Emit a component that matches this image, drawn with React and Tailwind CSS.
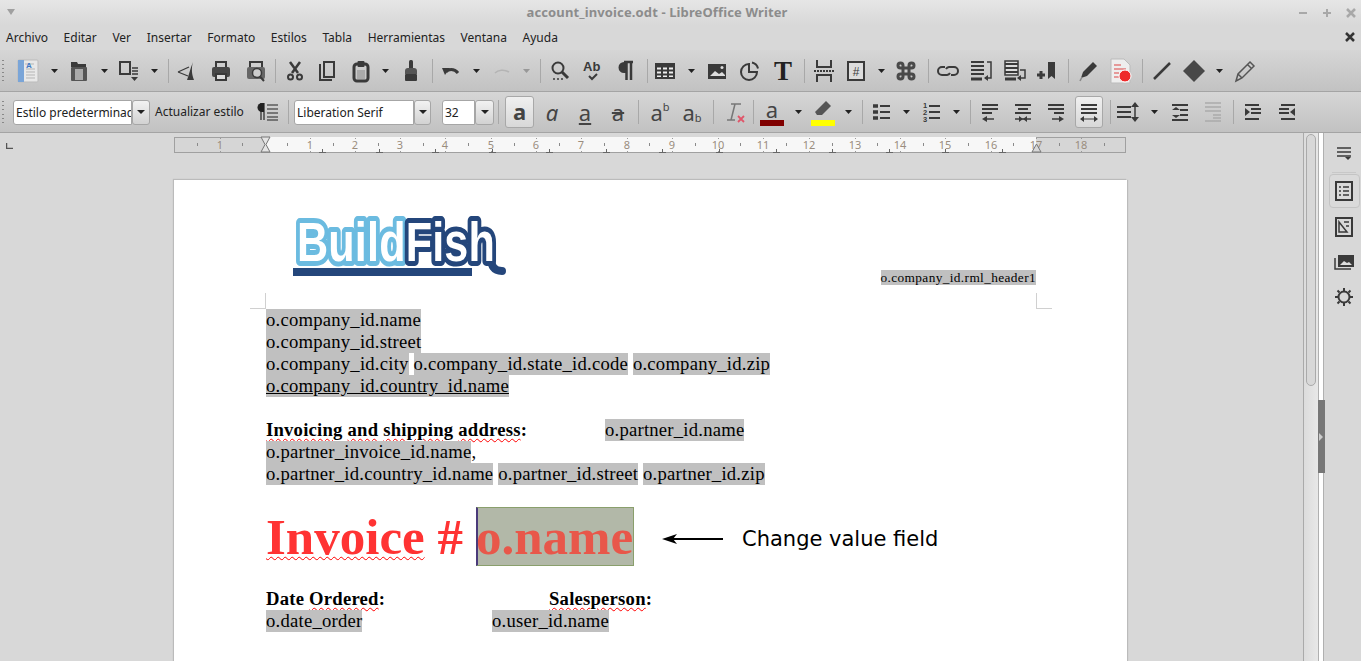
import React from 'react';

const ink = '#3a3a3a';

const Arrow = ({ className = '' }) => (
  <div className={`w-[8px] h-[24px] flex items-center justify-center shrink-0 ${className}`}>
    <svg width="7" height="4" viewBox="0 0 7 4"><path d="M0 0h7L3.500 4z" fill="#222" /></svg>
  </div>
);

const Sep = ({ className = '' }) => (
  <div className={`w-[1px] h-[24px] bg-[#a8a8a8] shrink-0 ${className}`} />
);

const Grip = () => (
  <div className="ml-[2px] w-[2px] h-[24px] shrink-0 flex flex-col justify-between py-[1px]">
    {[0, 1, 2, 3, 4, 5].map((i) => <div key={i} className="w-[2px] h-[1px] bg-[#888]" />)}
  </div>
);

const Ico = ({ className = '', children }) => (
  <div className={`w-[24px] h-[24px] flex items-center justify-center shrink-0 ${className}`}>
    <svg className="overflow-visible" width="24" height="24" viewBox="0 0 24 24" fill="none" stroke={ink} strokeWidth="2">{children}</svg>
  </div>
);

const Combo = ({ text, inputW, btnW, className = '' }) => (
  <div className={`flex h-[25px] shrink-0 ${className}`}>
    <div className={`${inputW} bg-white border border-[#a6a6a6] rounded-l-[3px] text-[12px] text-[#222] pl-[2px] leading-[24px] overflow-hidden whitespace-nowrap`}>{text}</div>
    <div className={`${btnW} bg-gradient-to-b from-[#f2f2f2] to-[#d2d2d2] border border-[#a6a6a6] rounded-[3px] flex items-center justify-center`}>
      <svg width="8" height="4" viewBox="0 0 8 4"><path d="M0 0h8L4 4z" fill="#222" /></svg>
    </div>
  </div>
);

const lines = (ys, x1, x2, w = 2) => ys.map((y) => <path key={y} d={`M${x1} ${y}H${x2}`} strokeWidth={w} />);

const Letter = ({ style = '', children }) => (
  <span className={`text-[22px] leading-none text-[#444] ${style}`}>{children}</span>
);

const TopToolbar = () => (
  <div className="h-[42px] flex items-center shrink-0 border-b border-[#a4a4a4] bg-gradient-to-b from-[#d6d6d6] to-[#c2c2c2]">
    <Grip />
    <Ico className="ml-[12px]">
      <rect x="2" y="1" width="20" height="22" rx="1" fill="#e8e8e8" stroke="#bbb" strokeWidth="1" />
      <rect x="2" y="1" width="6" height="22" fill="#7aa5d8" stroke="none" />
      <path d="M9 5h9M10 10h9M10 13h9M10 16h9M10 19h9" stroke="#b5b5b5" strokeWidth="1" />
      <text x="10" y="9" fontSize="8" fontFamily="Liberation Sans" fontWeight="700" fill="#3f78c4" stroke="none">A</text>
    </Ico>
    <Arrow className="ml-[10px]" />
    <Ico className="ml-[9px]">
      <path d="M4 3h6l1 2h8v3H4z" fill={ink} stroke="none" />
      <rect x="4" y="8" width="16" height="14" rx="1" fill="#555" stroke="none" />
      <rect x="8" y="10" width="8" height="11" fill="#aaa" stroke="none" />
    </Ico>
    <Arrow className="ml-[9px]" />
    <Ico className="ml-[8px]">
      <rect x="4" y="3" width="10" height="12" strokeWidth="2" />
      <path d="M16 9h6M16 12h6M16 15h6" strokeWidth="1.500" />
      <path d="M15 18h7l-3.500 4z" fill={ink} stroke="none" />
    </Ico>
    <Arrow className="ml-[10px]" />
    <Sep className="ml-[10px]" />
    <Ico className="ml-[5px]">
      <path d="M19 3C16 10 15 16 13 21h7c-2-5-3-11-1-18z" fill={ink} stroke="none" />
      <path d="M4 13l11-5M4 13l10 4" strokeWidth="1.300" />
    </Ico>
    <Ico className="ml-[11px]">
      <rect x="7" y="3" width="10" height="6" strokeWidth="2" />
      <rect x="3" y="8" width="18" height="10" rx="2" fill="#484848" stroke="none" />
      <rect x="7" y="15" width="10" height="6" fill="#ddd" strokeWidth="2" />
    </Ico>
    <Ico className="ml-[11px]">
      <path d="M6 8V3h12v5" strokeWidth="2" />
      <rect x="3" y="8" width="18" height="12" rx="2" fill="#666" stroke="none" />
      <circle cx="13" cy="14" r="4.500" fill="#ccc" strokeWidth="1.500" />
      <path d="M16 17.500L20 22" strokeWidth="2" />
    </Ico>
    <Sep className="ml-[7px]" />
    <Ico className="ml-[7px]">
      <path d="M7 3l8 11M17 3L9 14" strokeWidth="2.500" />
      <circle cx="7.500" cy="18" r="2.500" /><circle cx="16.500" cy="18" r="2.500" />
    </Ico>
    <Ico className="ml-[8px]">
      <path d="M9 3h10v15H9z" strokeWidth="2" />
      <path d="M6 6H5v15h11v-1" strokeWidth="2" />
    </Ico>
    <Ico className="ml-[10px]">
      <rect x="5" y="5" width="14" height="17" rx="3" strokeWidth="3" />
      <rect x="8.500" y="2" width="7" height="6" rx="1" fill={ink} stroke="none" />
      <rect x="8" y="11" width="8" height="9" fill="#aaa" stroke="none" />
    </Ico>
    <Arrow className="ml-[8px]" />
    <Ico className="ml-[10px]">
      <rect x="10" y="1" width="4" height="9" rx="1.500" fill={ink} stroke="none" />
      <path d="M6 12c0-2 1-3 3-3h6c2 0 3 1 3 3v3H6z" fill="#555" stroke="none" />
      <rect x="6" y="15" width="12" height="7" rx="1" fill={ink} stroke="none" />
    </Ico>
    <Sep className="ml-[9px]" />
    <Ico className="ml-[6px]">
      <path d="M7 13c2-3 8-4 12 1" strokeWidth="3" />
      <path d="M3 9l8 0-5 7z" fill={ink} stroke="none" />
    </Ico>
    <Arrow className="ml-[9px]" />
    <Ico className="ml-[11px]">
      <path d="M4 14c3-3 9-4 14-1" stroke="#b4b4b4" strokeWidth="1.500" />
    </Ico>
    <Arrow className="ml-[7px] opacity-30" />
    <Sep className="ml-[10px]" />
    <Ico className="ml-[7px]">
      <circle cx="10" cy="9" r="5.500" strokeWidth="2" />
      <path d="M14 13l6 6" strokeWidth="3" />
      <path d="M5 20h2M9 20h2M13 20h2" strokeWidth="1.500" />
    </Ico>
    <Ico className="ml-[9px]">
      <text x="2" y="12" fontSize="13" fontFamily="Liberation Sans" fontWeight="700" fill={ink} stroke="none">Ab</text>
      <path d="M8 17l3 3 5-5" strokeWidth="2" />
    </Ico>
    <Ico className="ml-[9px]">
      <path d="M13 3h-3a5.500 5.500 0 0 0 0 11h3z" fill={ink} stroke="none" />
      <path d="M12.500 3v18M17 3v18M10 3h9" strokeWidth="2.500" />
    </Ico>
    <Sep className="ml-[9px]" />
    <Ico className="ml-[5px]">
      <rect x="3" y="5" width="18" height="14" fill="#eee" strokeWidth="2" />
      <path d="M3 7h18" strokeWidth="3" />
      <path d="M3 11.500h18M3 15.500h18M9 7v12M15 7v12" strokeWidth="2" />
    </Ico>
    <Arrow className="ml-[10px]" />
    <Ico className="ml-[10px]">
      <rect x="3" y="5" width="18" height="15" fill={ink} stroke="none" />
      <path d="M5 17l5-5 4 3 3-2 3 3v1H5z" fill="#ddd" stroke="none" />
      <circle cx="17" cy="8.500" r="1.500" fill="#ddd" stroke="none" />
    </Ico>
    <Ico className="ml-[9px]">
      <path d="M11 5a8 8 0 1 0 8 8h-8zM14 3.500a8 8 0 0 1 6 6" strokeWidth="2" />
    </Ico>
    <Ico className="ml-[9px]">
      <text x="12" y="21" textAnchor="middle" fontSize="27" fontFamily="Liberation Serif" fontWeight="700" fill="#222" stroke="none">T</text>
    </Ico>
    <Sep className="ml-[9px]" />
    <Ico className="ml-[7px]">
      <path d="M5 1v7h14V1M5 23v-7h14v7" strokeWidth="2" />
      <path d="M2 12h20" strokeWidth="2" strokeDasharray="2 1" />
    </Ico>
    <Ico className="ml-[8px]">
      <rect x="4" y="3" width="16" height="18" fill="#ddd" strokeWidth="2" />
      <text x="12" y="17" textAnchor="middle" fontSize="12" fontFamily="Liberation Sans" fill={ink} stroke="none">#</text>
    </Ico>
    <Arrow className="ml-[9px]" />
    <Ico className="ml-[9px]">
      <path d="M9 9V6.500a2.500 2.500 0 1 0-2.500 2.500h11a2.500 2.500 0 1 0-2.500-2.500v11a2.500 2.500 0 1 0 2.500-2.500h-11a2.500 2.500 0 1 0 2.500 2.500z" stroke="#4a4a4a" strokeWidth="3" />
    </Ico>
    <Sep className="ml-[10px]" />
    <Ico className="ml-[7px]">
      <path d="M9 8H6a4 4 0 0 0 0 8h5a4 4 0 0 0 3-2M15 16h3a4 4 0 0 0 0-8h-5a4 4 0 0 0-3 2" strokeWidth="2" />
    </Ico>
    <Ico className="ml-[9px]">
      {lines([3, 7, 11, 15], 2, 15, 2)}
      <path d="M18 3h4v16h-6" strokeWidth="1.500" />
      <path d="M2 20h11" strokeWidth="3" />
      <path d="M19 16l-4 3 4 3z" fill={ink} stroke="none" />
    </Ico>
    <Ico className="ml-[10px]">
      <rect x="2" y="2" width="13" height="14" fill="#ddd" strokeWidth="1.500" />
      {lines([5, 9, 13], 2, 15, 2)}
      <path d="M17 11h5v8h-6" strokeWidth="1.500" />
      <path d="M2 20h11" strokeWidth="3" />
      <path d="M18 16l-4 3 4 3z" fill={ink} stroke="none" />
    </Ico>
    <Ico className="ml-[8px]">
      <path d="M2 16h8M6 12v8" strokeWidth="3" />
      <path d="M13 3h7v17l-3.500-3-3.500 3z" fill={ink} stroke="none" />
    </Ico>
    <Sep className="ml-[9px]" />
    <Ico className="ml-[7px]">
      <path d="M5 19l2-6L17 3l4 4-10 10z" fill={ink} stroke="none" />
      <path d="M4 22l2-4" strokeWidth="1.500" stroke="#888" />
    </Ico>
    <Ico className="ml-[9px]">
      <path d="M2 0h13l6 6v18H2z" fill="#eee" stroke="#bbb" strokeWidth="1" />
      <path d="M5 6h7M5 10h12M5 14h5M5 18h6" stroke="#d44" strokeWidth="1" />
      <circle cx="16" cy="17" r="6" fill="#ee2a2a" stroke="#fff" strokeWidth="1" />
    </Ico>
    <Sep className="ml-[9px]" />
    <Ico className="ml-[7px]"><path d="M4 20L20 4" strokeWidth="2.500" /></Ico>
    <Ico className="ml-[8px]"><path d="M12 1l11 11-11 11L1 12z" fill="#484848" stroke="none" /></Ico>
    <Arrow className="ml-[9px]" />
    <Ico className="ml-[10px]">
      <path d="M3 22l2-7L17 3l4 4L9 19zM14.500 5.500l4 4M5 15l4 4" strokeWidth="1.500" stroke="#555" />
    </Ico>
  </div>
);

const FormatToolbar = () => (
  <div className="h-[41px] flex items-center shrink-0 border-b border-[#a4a4a4] bg-gradient-to-b from-[#d6d6d6] to-[#c2c2c2]">
    <Grip />
    <Combo className="ml-[9px]" text="Estilo predeterminado" inputW="w-[119px]" btnW="w-[18px]" />
    <div className="ml-[5px] w-[90px] text-[12px] text-[#222] whitespace-nowrap shrink-0">Actualizar estilo</div>
    <Ico className="ml-[11px]">
      <path d="M8 3H6a4 4 0 0 0 0 9h2z" fill="#222" stroke="none" />
      <path d="M8 3v17M5 3v17M11 5h11M11 9h11M11 13h11M11 17h11M11 20h11" stroke="#222" strokeWidth="1.200" />
    </Ico>
    <Sep className="ml-[8px]" />
    <Combo className="ml-[5px]" text="Liberation Serif" inputW="w-[120px]" btnW="w-[17px]" />
    <Combo className="ml-[11px]" text="32" inputW="w-[33px]" btnW="w-[19px]" />
    <Sep className="ml-[4px]" />
    <div className="ml-[6px] w-[29px] h-[32px] shrink-0 bg-gradient-to-b from-[#f0f0f0] to-[#d8d8d8] border border-[#a8a8a8] rounded-[3px] flex items-center justify-center">
      <span className="text-[22px] leading-none font-bold text-[#444] -mt-[3px]">a</span>
    </div>
    <div className="ml-[6px] w-[24px] flex justify-center shrink-0"><Letter style="italic">a</Letter></div>
    <div className="ml-[9px] w-[24px] flex justify-center shrink-0"><Letter style="underline decoration-2 underline-offset-2">a</Letter></div>
    <div className="ml-[9px] w-[24px] flex justify-center shrink-0"><Letter style="line-through decoration-2">a</Letter></div>
    <Sep className="ml-[8px]" />
    <div className="ml-[9px] w-[24px] flex justify-center items-start shrink-0"><Letter>a</Letter><span className="text-[11px] leading-none text-[#444]">b</span></div>
    <div className="ml-[8px] w-[24px] flex justify-center items-end shrink-0"><Letter>a</Letter><span className="text-[11px] leading-none text-[#444]">b</span></div>
    <Sep className="ml-[9px]" />
    <Ico className="ml-[9px]">
      <path d="M8 4h10M12 4L8 20M4 20h8" stroke="#777" strokeWidth="1.500" />
      <path d="M15 16l6 6M21 16l-6 6" stroke="#e0566a" strokeWidth="1.800" />
    </Ico>
    <Sep className="ml-[6px]" />
    <div className="ml-[6px] w-[24px] h-[28px] flex flex-col items-center shrink-0">
      <span className="text-[22px] leading-[22px] text-[#444]">a</span>
      <div className="w-[24px] h-[6px] bg-[#800000]" />
    </div>
    <Arrow className="ml-[10px]" />
    <div className="ml-[9px] w-[24px] h-[28px] flex flex-col items-center justify-between shrink-0">
      <svg width="20" height="20" viewBox="0 0 20 20"><path d="M2 14L13 3l5 5-9 9H4z" fill="#555" /></svg>
      <div className="w-[24px] h-[6px] bg-[#ffff00]" />
    </div>
    <Arrow className="ml-[9px]" />
    <Sep className="ml-[10px]" />
    <Ico className="ml-[6px]">
      <path d="M4 6h5M4 12h5M4 18h5" strokeWidth="3.500" />
      <path d="M11 6h10M11 12h10M11 18h10" strokeWidth="2" />
    </Ico>
    <Arrow className="ml-[9px]" />
    <Ico className="ml-[9px]">
      <text x="4" y="8" fontSize="7.500" fontFamily="Liberation Sans" fontWeight="700" fill={ink} stroke="none">1</text>
      <text x="4" y="15" fontSize="7.500" fontFamily="Liberation Sans" fontWeight="700" fill={ink} stroke="none">2</text>
      <text x="4" y="22" fontSize="7.500" fontFamily="Liberation Sans" fontWeight="700" fill={ink} stroke="none">3</text>
      <path d="M10 6h11M10 12h11M10 18h11" strokeWidth="2" />
    </Ico>
    <Arrow className="ml-[9px]" />
    <Sep className="ml-[10px]" />
    <Ico className="ml-[7px]">
      <path d="M4 5h16M4 9h16M4 13h10" strokeWidth="2" />
      <path d="M7 19h9" strokeWidth="1.500" /><path d="M4 19l5-3v6z" fill={ink} stroke="none" />
    </Ico>
    <Ico className="ml-[9px]">
      <path d="M4 5h16M7 9h10M4 13h16" strokeWidth="2" />
      <path d="M4 19h16" strokeWidth="1.500" /><path d="M12 19l-4-3v6zM12 19l4-3v6z" fill={ink} stroke="none" />
    </Ico>
    <Ico className="ml-[9px]">
      <path d="M4 5h16M4 9h16M10 13h10" strokeWidth="2" />
      <path d="M8 19h9" strokeWidth="1.500" /><path d="M20 19l-5-3v6z" fill={ink} stroke="none" />
    </Ico>
    <div className="ml-[7px] w-[28px] h-[32px] shrink-0 bg-gradient-to-b from-[#f0f0f0] to-[#d8d8d8] border border-[#a8a8a8] rounded-[3px] flex items-center justify-center">
      <svg width="20" height="24" viewBox="0 0 20 24" fill="none" stroke={ink}>
        <path d="M2 5h16M2 9h16M2 13h16" strokeWidth="2" />
        <path d="M3 19h14" strokeWidth="1" /><path d="M1 19l4-3v6zM19 19l-4-3v6z" fill={ink} stroke="none" />
      </svg>
    </div>
    <Sep className="ml-[7px]" />
    <Ico className="ml-[5px]">
      <path d="M1 7h14M1 12h14M1 17h14" strokeWidth="2" />
      <path d="M19 6v12" strokeWidth="1.500" /><path d="M19 2l-4 5h8zM19 22l-4-5h8z" fill={ink} stroke="none" />
    </Ico>
    <Arrow className="ml-[10px]" />
    <Ico className="ml-[10px]">
      <path d="M4 5h16M12 10h8M12 15h8M4 20h16" strokeWidth="2" />
      <path d="M8 7l-4 3h8zM8 18l-4-3h8z" fill={ink} stroke="none" />
    </Ico>
    <Ico className="ml-[9px]">
      <path d="M4 3h16M4 7h16M4 11h16M12 15h8M12 18h8M4 21h16" stroke="#aaa" strokeWidth="1.500" />
    </Ico>
    <Sep className="ml-[8px]" />
    <Ico className="ml-[7px]">
      <path d="M4 5h14M10 9h10M10 13h10M4 19h14" strokeWidth="2" />
      <path d="M4 8l5 4-5 4z" fill={ink} stroke="none" />
    </Ico>
    <Ico className="ml-[10px]">
      <path d="M6 5h14M4 9h10M4 13h10M6 19h14" strokeWidth="2" />
      <path d="M20 8l-5 4 5 4z" fill={ink} stroke="none" />
    </Ico>
  </div>
);

// ruler numbers sit at fixed spots on the scale
const rulerNums = [
  [220, '1'], [310, '1'], [355, '2'], [400, '3'], [445, '4'], [491, '5'], [536, '6'], [581, '7'], [627, '8'],
  [672, '9'], [718, '10'], [763, '11'], [809, '12'], [855, '13'], [900, '14'], [945, '15'], [991, '16'], [1036, '17'], [1081, '18'],
];
const rulerDots = [197, 242, 287, 333, 378, 423, 468, 514, 559, 604, 649, 695, 740, 786, 832, 877, 923, 968, 1013, 1059, 1104];
const tabStops = [322, 379, 435, 492, 549, 606, 662, 719, 776, 832, 889, 945, 1002];

const Ruler = () => (
  <div className="relative h-[28px] shrink-0">
    <svg className="absolute left-[6px] top-[10px]" width="7" height="6"><path d="M0.500 0v5.500H7" stroke="#555" fill="none" strokeWidth="1.500" /></svg>
    <div className="absolute left-[174px] top-[4px] w-[952px] h-[16px] border border-[#a0a0a0] bg-[#d6d6d6]" />
    <div className="absolute left-[265px] top-[4px] w-[771px] h-[15px] bg-[#f7f7f7]" />
    {rulerNums.map(([x, n]) => (
      <span key={x} style={{ left: x - 10 }} className="absolute top-[4px] w-[20px] text-center text-[11px] leading-[16px] text-[#9a8d7e]">{n}</span>
    ))}
    {rulerNums.map(([x]) => (
      <div key={x} style={{ left: x }} className="absolute top-[5px] w-[1px] h-[14px] border-y border-[#999]" />
    ))}
    {rulerDots.map((x) => <div key={x} style={{ left: x }} className="absolute top-[10px] w-[1px] h-[3px] bg-[#8a8a8a]" />)}
    {tabStops.map((x) => (
      <svg key={x} style={{ left: x - 3 }} className="absolute top-[16px]" width="7" height="4"><path d="M3.500 0v3.500M0 3.500h7" stroke="#666" fill="none" /></svg>
    ))}
    <svg className="absolute left-[260px] top-[3px]" width="11" height="17" viewBox="0 0 11 17"><path d="M1 1h9L6 8.500l4 7.500H1l4-7.500z" fill="#e4e4e4" stroke="#777" /></svg>
    <svg className="absolute left-[1031px] top-[3px]" width="11" height="17" viewBox="0 0 11 17"><path d="M5.500 8l4.500 8H1z" fill="#d8d8d8" stroke="#777" /></svg>
  </div>
);

const Field = ({ children }) => <span className="inline-block h-[22px] bg-[#c0c0c0]">{children}</span>;
const Wavy = ({ children }) => <span className="underline decoration-wavy decoration-[#f00] decoration-1 underline-offset-[2px]">{children}</span>;

const Logo = () => (
  <svg width="216" height="66" viewBox="0 0 216 66" className="block">
    <path d="M197 40c3 9 1 19 13 19" stroke="#24467b" strokeWidth="8" fill="none" strokeLinecap="round" />
    <rect x="1" y="56" width="179" height="8" fill="#24467b" />
    <text x="5" y="49" textLength="198" lengthAdjust="spacingAndGlyphs" fontFamily="Liberation Sans" fontWeight="700" fontSize="56" strokeLinejoin="round" fill="#fff" style={{ paintOrder: 'stroke' }} strokeWidth="10" stroke="#6bbbe0">
      Build<tspan stroke="#24467b">Fish</tspan>
    </text>
  </svg>
);

const Page = () => (
  <div className="relative w-[953px] ml-[174px] mt-[19px] bg-white shadow-[-1px_-1px_1px_#bbb,1px_0_1px_#bbb] pl-[92px] pr-[91px] font-['Liberation_Serif',serif] text-[18.67px] leading-[22px] tracking-[0.22px] text-black">
    <div className="h-[129px] relative flex justify-between items-end">
      <div className="ml-[26px] mb-[31px]"><Logo /></div>
      <div className="mb-[23px] text-[13.33px] leading-[16px] tracking-[0.37px]"><span className="bg-[#c0c0c0]">o.company_id.rml_header1</span></div>
      <div className="absolute left-[-16px] bottom-0 w-[16px] h-[16px] border-r border-b border-[#d0d0d0]" />
      <div className="absolute right-[-16px] bottom-0 w-[16px] h-[16px] border-l border-b border-[#d0d0d0]" />
    </div>
    <div className="h-[22px]"><Field>o.company_id.name</Field></div>
    <div className="h-[22px]"><Field>o.company_id.street</Field></div>
    <div className="h-[22px]"><Field>o.company_id.city</Field> <Field>o.company_id.state_id.code</Field> <Field>o.company_id.zip</Field></div>
    <div className="h-[22px]"><Field><span className="underline">o.company_id.country_id.name</span></Field></div>
    <div className="h-[22px]" />
    <div className="h-[22px] flex">
      <b className="w-[339px] shrink-0"><Wavy>Invoicing</Wavy> <Wavy>and</Wavy> <Wavy>shipping</Wavy> <Wavy>address</Wavy>:</b>
      <Field>o.partner_id.name</Field>
    </div>
    <div className="h-[22px]"><Field>o.partner_invoice_id.name</Field>,</div>
    <div className="h-[22px]"><Field>o.partner_id.country_id.name</Field> <Field>o.partner_id.street</Field> <Field>o.partner_id.zip</Field></div>
    <div className="h-[22px]" />
    <div className="h-[59px] flex items-center text-[51px] tracking-normal font-bold text-[#ff3333] whitespace-pre">
      <span className="w-[210px] shrink-0"><Wavy>Invoice</Wavy> #</span>
      <span className="h-[59px] leading-[59px] w-[158px] shrink-0 bg-[#b2b8a8] border border-[#8a9f6c] border-l-2 border-l-[#4a3a7a] text-[#e8574a]"><span className="-ml-[2px]">o.name</span></span>
    </div>
    <div className="h-[22px]" />
    <div className="h-[22px] flex font-bold">
      <div className="w-[283px] shrink-0">Date <Wavy>Ordered</Wavy>:</div>
      <div><Wavy>Salesperson</Wavy>:</div>
    </div>
    <div className="h-[22px] flex">
      <div className="w-[226px] shrink-0"><Field>o.date_order</Field></div>
      <div><Field>o.user_id.name</Field></div>
    </div>
    <div className="h-[60px]" />
    <div className="absolute left-[488px] top-[343px] flex items-center h-[32px]">
      <svg width="61" height="14" viewBox="0 0 61 14"><path d="M61 7H6" stroke="#000" strokeWidth="2" /><path d="M0 7l15-5-4 5 4 5z" fill="#000" /></svg>
      <span className="ml-[19px] font-['DejaVu_Sans',sans-serif] text-[21px] tracking-normal whitespace-nowrap">Change value field</span>
    </div>
  </div>
);

const SideIcon = ({ active, children }) => (
  <div className={`w-[31px] h-[34px] rounded-[4px] flex items-center justify-center ${active ? 'border border-[#c4c4c4] bg-[#dadada] mb-[1px]' : ''}`}>
    <svg width="20" height="20" viewBox="0 0 20 20" fill="none" stroke={ink} strokeWidth="1.500">{children}</svg>
  </div>
);

const Sidebar = () => (
  <div className="w-[37px] shrink-0 bg-[#d8d8d8] flex flex-col items-center gap-[1px] pl-[3px] pt-[13px]">
    <svg width="16" height="14" viewBox="0 0 16 14" fill="none" stroke={ink} strokeWidth="1.500">
      <path d="M1 2h14M1 6h14M1 10h14" /><path d="M9 11h6l-3 3z" fill={ink} stroke="none" />
    </svg>
    <div className="w-[24px] h-[1px] bg-[#c8c8c8] mt-[11px]" />
    <SideIcon active>
      <rect x="2" y="1" width="16" height="18" strokeWidth="2" />
      <path d="M5 6h2M9 6h6M5 10h2M9 10h6M5 14h2M9 14h6" />
    </SideIcon>
    <SideIcon>
      <rect x="2" y="1" width="16" height="18" strokeWidth="2" />
      <path d="M5 5l8 10H5zM10 5h5M12 9h3" />
    </SideIcon>
    <SideIcon>
      <rect x="4" y="3" width="16" height="12" fill={ink} stroke="none" />
      <path d="M1 6v11h16" strokeWidth="1.500" />
      <path d="M6 13l4-4 3 2 2-1 3 3z" fill="#ddd" stroke="none" />
    </SideIcon>
    <SideIcon>
      <circle cx="10" cy="10" r="5.500" strokeWidth="2" />
      <path d="M10 1v3M10 16v3M1 10h3M16 10h3M3.500 3.500l2 2M14.500 14.500l2 2M16.500 3.500l-2 2M5.500 14.500l-2 2" strokeWidth="2" />
    </SideIcon>
  </div>
);

export default function App() {
  return (
    <div className="h-screen w-full overflow-hidden flex flex-col bg-[#d8d8d8] font-['Noto_Sans',sans-serif]">
      {/* title bar */}
      <div className="relative h-[25px] shrink-0 flex items-center justify-center pr-[47px] pt-[1px] bg-gradient-to-b from-[#e6e6e6] to-[#d8d8d8]">
        <svg className="absolute left-[7px] top-[9px]" width="8" height="6"><path d="M0 0h8L4 6z" fill="#a0a0a0" /></svg>
        <span className="text-[13px] tracking-[0.12px] font-bold text-[#8c8c8c]">account_invoice.odt - LibreOffice Writer</span>
        <div className="absolute right-[4px] top-[6px] flex gap-[12px]">
          <svg width="12" height="12"><path d="M2 7h8" stroke="#a8a8a8" strokeWidth="2" /></svg>
          <svg width="12" height="12"><path d="M2 7h8M6 3v8" stroke="#a8a8a8" strokeWidth="2" /></svg>
          <svg width="12" height="12"><path d="M2 3l8 8M10 3l-8 8" stroke="#a8a8a8" strokeWidth="2.500" /></svg>
        </div>
      </div>
      {/* menu */}
      <div className="relative h-[25px] shrink-0 flex items-center pl-[6px] gap-[15.6px] text-[12px] text-[#222] bg-[#d8d8d8]">
        {['Archivo', 'Editar', 'Ver', 'Insertar', 'Formato', 'Estilos', 'Tabla', 'Herramientas', 'Ventana', 'Ayuda'].map((m) => <span key={m}>{m}</span>)}
        <svg className="absolute right-[5px] top-[6px]" width="12" height="12"><path d="M2 2l8 8M10 2l-8 8" stroke="#333" strokeWidth="2.500" /></svg>
      </div>
      <TopToolbar />
      <FormatToolbar />
      <div className="flex-1 min-h-0 flex overflow-hidden">
        <div className="w-[1303px] shrink-0 overflow-hidden flex flex-col">
          <Ruler />
          <Page />
        </div>
        <div className="w-[15px] shrink-0 border-l border-[#aaa] bg-gradient-to-r from-[#dcdcdc] to-[#e8e8e8] pl-[2px] pt-[1px]">
          <div className="w-[10px] h-[252px] rounded-[5px] border border-[#aaa] bg-[#d8d8d8]" />
        </div>
        <div className="relative w-[6px] shrink-0 bg-white border-x border-[#b0b0b0]">
          <div className="absolute left-[-1px] top-[267px] w-[7px] h-[73px] bg-[#777] flex items-center">
            <svg width="6" height="8"><path d="M1 0l4 4-4 4z" fill="#ccc" /></svg>
          </div>
        </div>
        <Sidebar />
      </div>
    </div>
  );
}
